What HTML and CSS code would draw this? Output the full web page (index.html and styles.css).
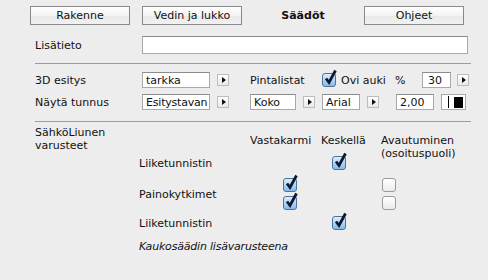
FILE: index.html
```html
<!DOCTYPE html>
<html lang="fi">
<head>
	<meta charset="UTF-8" />
	<title>Säädöt</title>
	<link rel="stylesheet" href="styles.css">
</head>
<body>

	<div class="toolbar">
		<button class="toolbar__button">Rakenne</button>
		<button class="toolbar__button">Vedin ja lukko</button>
		<span class="toolbar__title">Säädöt</span>
		<button class="toolbar__button">Ohjeet</button>
	</div>

	<div class="panel">
		<div class="panel__row panel__row--info">
			<span class="panel__label">Lisätieto</span>
			<span class="field field--wide"></span>
		</div>

		<div class="panel__separator"></div>

		<div class="panel__row panel__row--first">
			<span class="panel__label">3D esitys</span>
			<span class="field field--choice">tarkka</span>
			<span class="arrow"></span>
			<span class="panel__text panel__text--pinta">Pintalistat</span>
			<span class="check check--on"><svg class="check__tick" width="14" height="17" viewBox="0 0 14 17"><path d="M3 9.5 L6 13.5 L12.5 1.5" fill="none" stroke="#0e1b2e" stroke-width="2.8"/></svg></span>
			<span class="panel__text panel__text--ovi">Ovi auki</span>
			<span class="panel__text panel__text--pct">%</span>
			<span class="field field--pct">30</span>
			<span class="arrow arrow--pct"></span>
		</div>

		<div class="panel__row panel__row--second">
			<span class="panel__label">Näytä tunnus</span>
			<span class="field field--choice field--clip">Esitystavan nimi</span>
			<span class="arrow"></span>
			<span class="field field--koko">Koko</span>
			<span class="arrow"></span>
			<span class="field field--font">Arial</span>
			<span class="arrow"></span>
			<span class="field field--size">2,00</span>
			<span class="swatch"><span class="swatch__bar"></span><span class="swatch__color"></span></span>
		</div>

		<div class="panel__separator panel__separator--second"></div>

		<div class="equip">
			<div class="equip__title">SähköLiunen<br>varusteet</div>
			<div class="equip__grid">
				<span></span>
				<span class="equip__head">Vastakarmi</span>
				<span class="equip__head">Keskellä</span>
				<span class="equip__head equip__head--tall">Avautuminen<br>(osoituspuoli)</span>

				<span class="equip__item">Liiketunnistin</span>
				<span></span>
				<span class="equip__cell equip__cell--mid"><span class="check check--on"><svg class="check__tick" width="14" height="17" viewBox="0 0 14 17"><path d="M3 9.5 L6 13.5 L12.5 1.5" fill="none" stroke="#0e1b2e" stroke-width="2.8"/></svg></span></span>

				<span class="equip__item">Painokytkimet</span>
				<span class="equip__cell equip__cell--door equip__cell--stack">
					<span class="check check--on"><svg class="check__tick" width="14" height="17" viewBox="0 0 14 17"><path d="M3 9.5 L6 13.5 L12.5 1.5" fill="none" stroke="#0e1b2e" stroke-width="2.8"/></svg></span>
					<span class="check check--on"><svg class="check__tick" width="14" height="17" viewBox="0 0 14 17"><path d="M3 9.5 L6 13.5 L12.5 1.5" fill="none" stroke="#0e1b2e" stroke-width="2.8"/></svg></span>
				</span>
				<span></span>
				<span class="equip__cell equip__cell--open equip__cell--stack">
					<span class="check"></span>
					<span class="check"></span>
				</span>

				<span class="equip__item">Liiketunnistin</span>
				<span></span>
				<span class="equip__cell equip__cell--mid"><span class="check check--on"><svg class="check__tick" width="14" height="17" viewBox="0 0 14 17"><path d="M3 9.5 L6 13.5 L12.5 1.5" fill="none" stroke="#0e1b2e" stroke-width="2.8"/></svg></span></span>
				<span></span>

				<span class="equip__item equip__item--note">Kaukosäädin lisävarusteena</span>
			</div>
		</div>
	</div>

</body>
</html>
```

FILE: styles.css
```css
* {
	box-sizing: border-box;
}

html {
	margin: 0px;
	padding: 0px;
}

body {
	margin: 0px;
	padding: 0px;
	width: 488px;
	height: 280px;
	overflow: hidden;
	background-color: #ededed;
	font-family: "DejaVu Sans", sans-serif;
	font-size: 11px;
	color: #111;
}

.toolbar {
	display: flex;
	align-items: center;
	gap: 12px;
	padding: 6px 0 0 30px;
}

.toolbar__button {
	width: 100px;
	height: 19px;
	padding: 0;
	border: 1px solid #8a8a8a;
	border-radius: 0;
	background: linear-gradient(#ffffff, #f3f3f3 50%, #e9e9e9 51%, #f1f1f1);
	font-family: inherit;
	font-size: 11px;
	color: #111;
}

.toolbar__title {
	width: 98px;
	text-align: center;
	font-weight: bold;
}

.panel {
	padding: 0 17px 0 35px;
}

.panel__row {
	display: flex;
	align-items: center;
}

.panel__row--info {
	margin-top: 11px;
	height: 18px;
}

.panel__row--first {
	margin-top: 8px;
	height: 16px;
}

.panel__row--second {
	margin-top: 6px;
	height: 16px;
}

.panel__label {
	width: 107px;
	flex-shrink: 0;
}

.panel__separator {
	margin-top: 9px;
	height: 1px;
	background-color: #9c9c9c;
}

.panel__separator--second {
	margin-top: 11px;
}

.panel__text {
	flex-shrink: 0;
}

.panel__text--pinta {
	margin-left: 21px;
	width: 72px;
}

.panel__text--ovi {
	margin-left: 5px;
	width: 54px;
}

.panel__text--pct {
	width: 27px;
}

.field {
	display: block;
	flex-shrink: 0;
	height: 16px;
	line-height: 15px;
	padding-left: 3px;
	background-color: #fff;
	border: 1px solid #a9a9a9;
	border-top-color: #8c8c8c;
	white-space: nowrap;
	overflow: hidden;
}

.field--clip {
	letter-spacing: -0.2px;
}

.field--wide {
	width: 326px;
	height: 18px;
}

.field--choice {
	width: 68px;
}

.field--pct {
	width: 29px;
	padding-left: 5px;
}

.field--koko {
	margin-left: 21px;
	width: 46px;
}

.field--font {
	margin-left: 7px;
	width: 38px;
}

.field--size {
	margin-left: 17px;
	width: 38px;
}

.arrow {
	display: flex;
	align-items: center;
	justify-content: center;
	flex-shrink: 0;
	margin-left: 7px;
	width: 12px;
	height: 12px;
	border: 1px solid #bdbdbd;
	background: linear-gradient(#ffffff, #e9e9e9);
}

.arrow::after {
	content: "";
	border-top: 3px solid transparent;
	border-bottom: 3px solid transparent;
	border-left: 4px solid #111;
	margin-left: 1px;
}

.arrow--pct {
	margin-left: 6px;
}

.swatch {
	display: flex;
	align-items: center;
	flex-shrink: 0;
	margin-left: 7px;
	width: 25px;
	height: 16px;
	background-color: #fff;
	border: 1px solid #a9a9a9;
	padding-left: 6px;
}

.swatch__bar {
	width: 1px;
	height: 12px;
	background-color: #000;
}

.swatch__color {
	margin-left: 5px;
	width: 9px;
	height: 11px;
	background-color: #000;
}

.check {
	position: relative;
	display: block;
	flex-shrink: 0;
	width: 14px;
	height: 14px;
	border: 1px solid #9a9a9a;
	border-radius: 3px;
	background: linear-gradient(#ffffff, #ebebeb);
}

.check--on {
	border-color: #4f7299;
	background: linear-gradient(#dcedfc, #aed2f4 55%, #86bbee);
}

.check__tick {
	position: absolute;
	left: 0px;
	top: -5px;
}

.equip {
	display: flex;
	padding-top: 4px;
}

.equip__title {
	width: 104px;
	flex-shrink: 0;
	line-height: 13px;
}

.equip__grid {
	margin-top: 8px;
	display: grid;
	grid-template-columns: 111px 71px 60px 90px;
	grid-template-rows: 15px 28px 34px 24px 22px;
	align-items: center;
}

.equip__head {
	align-self: start;
	line-height: 13px;
	white-space: nowrap;
}

.equip__head--tall {
	grid-row: span 2;
}

.equip__item--note {
	grid-column: span 4;
	font-style: italic;
	letter-spacing: -0.2px;
}

.equip__cell {
	display: flex;
}

.equip__cell--stack {
	flex-direction: column;
	gap: 4px;
}

.equip__cell--door {
	padding-left: 33px;
}

.equip__cell--mid {
	padding-left: 11px;
}

.equip__cell--open {
	padding-left: 1px;
}
```
